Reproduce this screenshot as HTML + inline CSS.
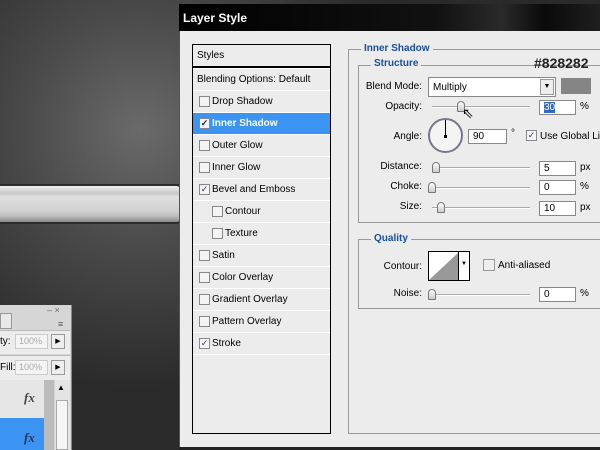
<!DOCTYPE html>
<html><head><style>
*{margin:0;padding:0;box-sizing:border-box}
body{width:600px;height:450px;overflow:hidden;position:relative;font-family:"Liberation Sans",sans-serif;font-size:10px;color:#000;white-space:nowrap;
background:radial-gradient(ellipse 260px 260px at 140px 130px,#6a6a6a 0%,#4a4a4a 45%,#2a2a2a 100%)}
.a{position:absolute}
.dlg{left:179px;top:4px;width:430px;height:446px;background:#ececec;border:1px solid #555}
.title{left:179px;top:4px;width:430px;height:27px;background:linear-gradient(90deg,#000 0%,#111 60%,#2a2a2a 75%,#0a0a0a 85%,#222 100%);color:#fff;font-weight:bold;font-size:12px;padding:7px 4px}
.list{left:192px;top:44px;width:139px;height:390px;border:1px solid #000;background:#ececec}
.row{position:absolute;left:0;width:137px;height:22px;border-bottom:1px solid #fff;line-height:21px;font-size:10px}
.cb{position:absolute;top:5px;width:11px;height:11px;border:1px solid #888;background:#f4f4f4}
.row span{position:absolute;top:0}
.sel{background:#3b93f2;color:#fff;font-weight:bold}
.grp{border:1px solid #999;border-right:none}
.lbl{color:#1a4f9c;font-weight:bold;font-size:10px;background:#ececec;padding:0 3px}
.inp{background:#fff;border:1px solid #888;height:15px;font-size:10px;padding:1px 4px;line-height:12px}
.track{height:2px;background:#aaa;border-bottom:1px solid #fff}
.thumb{width:8px;height:11px;border:1px solid #777;border-radius:4px 4px 1px 1px;background:linear-gradient(#fff,#ccc)}
.r{text-align:right}
</style></head><body>
<div class="a" style="left:0;top:184px;width:182px;height:40px;background:#2d2d2d"></div>
<div class="a" style="left:0;top:186px;width:182px;height:36px;border-radius:0 6px 6px 0;background:linear-gradient(#eee 0%,#ddd 10%,#c8c8c8 20%,#e0e0e0 30%,#d0d0d0 70%,#bbb 85%,#888 100%)"></div>
<div class="a" style="left:0;top:305px;width:72px;height:145px;background:#d6d6d6;border-right:1px solid #888"></div>
<div class="a" style="left:0;top:313px;width:12px;height:16px;background:#e8e8e8;border:1px solid #999"></div>
<div class="a" style="left:47px;top:305px;font-size:9px;color:#666">– ×</div>
<div class="a" style="left:58px;top:319px;font-size:9px;color:#555">≡</div>
<div class="a" style="left:0;top:330px;width:70px;height:24px;background:#ececec;border-top:1px solid #bbb"></div>
<div class="a" style="left:0;top:336px;font-size:10px">ty:</div>
<div class="a" style="left:15px;top:334px;width:33px;height:15px;background:#f4f4f4;border:1px solid #ccc;font-size:9px;color:#aaa;padding:1px 3px">100%</div>
<div class="a" style="left:51px;top:334px;width:14px;height:15px;background:#eee;border:1px solid #999;font-size:7px;text-align:center;line-height:13px">▶</div>
<div class="a" style="left:0;top:355px;width:70px;height:25px;background:#ececec;border-top:1px solid #bbb"></div>
<div class="a" style="left:0;top:362px;font-size:10px">Fill:</div>
<div class="a" style="left:15px;top:360px;width:33px;height:15px;background:#f4f4f4;border:1px solid #ccc;font-size:9px;color:#aaa;padding:1px 3px">100%</div>
<div class="a" style="left:51px;top:360px;width:14px;height:15px;background:#eee;border:1px solid #999;font-size:7px;text-align:center;line-height:13px">▶</div>
<div class="a" style="left:0;top:380px;width:54px;height:38px;background:#e6e6e6"></div>
<div class="a" style="left:24px;top:390px;font-style:italic;font-weight:bold;font-family:'Liberation Serif',serif;font-size:13px;color:#444">fx</div>
<div class="a" style="left:0;top:418px;width:54px;height:32px;background:#3b93f2"></div>
<div class="a" style="left:24px;top:430px;font-style:italic;font-weight:bold;font-family:'Liberation Serif',serif;font-size:13px;color:#335">fx</div>
<div class="a" style="left:44px;top:380px;width:10px;height:70px;background:#bbb"></div>
<div class="a" style="left:55px;top:380px;width:15px;height:70px;background:#e4e4e4"></div>
<div class="a" style="left:57px;top:383px;font-size:8px">▲</div>
<div class="a" style="left:56px;top:400px;width:12px;height:50px;background:#f5f5f5;border:1px solid #aaa"></div>
<div class="a dlg"></div>
<div class="a title">Layer Style</div>
<div class="a list">
 <div class="row" style="top:0;height:23px;border-bottom:2px solid #000;box-shadow:0 1px 0 #fff"><span style="left:4px">Styles</span></div>
 <div class="row" style="top:24px"><span style="left:4px">Blending Options: Default</span></div>
 <div class="row" style="top:46px"><i class="cb" style="left:6px"></i><span style="left:19px">Drop Shadow</span></div>
 <div class="row sel" style="top:68px"><i class="cb" style="left:6px;color:#225;font-style:normal;font-size:9px;line-height:9px;text-align:center">✓</i><span style="left:19px">Inner Shadow</span></div>
 <div class="row" style="top:90px"><i class="cb" style="left:6px"></i><span style="left:19px">Outer Glow</span></div>
 <div class="row" style="top:112px"><i class="cb" style="left:6px"></i><span style="left:19px">Inner Glow</span></div>
 <div class="row" style="top:134px"><i class="cb" style="left:6px;font-style:normal;font-size:9px;line-height:9px;text-align:center;color:#336">✓</i><span style="left:19px">Bevel and Emboss</span></div>
 <div class="row" style="top:156px"><i class="cb" style="left:19px"></i><span style="left:32px">Contour</span></div>
 <div class="row" style="top:178px"><i class="cb" style="left:19px"></i><span style="left:32px">Texture</span></div>
 <div class="row" style="top:200px"><i class="cb" style="left:6px"></i><span style="left:19px">Satin</span></div>
 <div class="row" style="top:222px"><i class="cb" style="left:6px"></i><span style="left:19px">Color Overlay</span></div>
 <div class="row" style="top:244px"><i class="cb" style="left:6px"></i><span style="left:19px">Gradient Overlay</span></div>
 <div class="row" style="top:266px"><i class="cb" style="left:6px"></i><span style="left:19px">Pattern Overlay</span></div>
 <div class="row" style="top:288px"><i class="cb" style="left:6px;font-style:normal;font-size:9px;line-height:9px;text-align:center;color:#336">✓</i><span style="left:19px">Stroke</span></div>
</div>
<div class="a grp" style="left:348px;top:49px;width:260px;height:385px"></div>
<div class="a lbl" style="left:361px;top:43px">Inner Shadow</div>
<div class="a grp" style="left:358px;top:65px;width:250px;height:158px"></div>
<div class="a lbl" style="left:371px;top:58px">Structure</div>
<div class="a" style="left:534px;top:55px;font-weight:bold;font-size:14px;color:#222">#828282</div>
<div class="a r" style="left:350px;width:72px;top:81px">Blend Mode:</div>
<div class="a inp" style="left:428px;top:77px;width:128px;height:20px;padding:4px"><span>Multiply</span></div>
<div class="a" style="left:540px;top:79px;width:14px;height:16px;background:#eee;border:1px solid #999;font-size:7px;text-align:center;line-height:14px">▼</div>
<div class="a" style="left:561px;top:78px;width:30px;height:16px;background:#858585"></div>
<div class="a r" style="left:350px;width:72px;top:101px">Opacity:</div>
<div class="a track" style="left:432px;top:106px;width:98px"></div>
<div class="a thumb" style="left:457px;top:101px"></div>
<div class="a" style="left:462px;top:106px;font-size:14px;line-height:14px">⇖</div>
<div class="a inp" style="left:539px;top:100px;width:37px"><span style="background:#3169c6;color:#fff">30</span></div>
<div class="a" style="left:580px;top:101px">%</div>
<div class="a r" style="left:350px;width:72px;top:131px">Angle:</div>
<div class="a" style="left:428px;top:118px;width:35px;height:35px;border-radius:50%;border:2px solid #778;background:#f4f4f4"></div>
<div class="a" style="left:445px;top:120px;width:1px;height:16px;background:#000"></div>
<div class="a" style="left:444px;top:135px;width:3px;height:3px;background:#000"></div>
<div class="a inp" style="left:468px;top:129px;width:39px">90</div>
<div class="a" style="left:511px;top:128px">°</div>
<div class="a" style="left:526px;top:130px;width:11px;height:11px;border:1px solid #888;background:#f4f4f4;font-size:9px;line-height:9px;text-align:center;color:#336">✓</div>
<div class="a" style="left:540px;top:131px">Use Global Light</div>
<div class="a r" style="left:350px;width:72px;top:161px">Distance:</div>
<div class="a track" style="left:432px;top:167px;width:98px"></div>
<div class="a thumb" style="left:432px;top:162px"></div>
<div class="a inp" style="left:539px;top:161px;width:37px">5</div>
<div class="a" style="left:580px;top:162px">px</div>
<div class="a r" style="left:350px;width:72px;top:181px">Choke:</div>
<div class="a track" style="left:430px;top:187px;width:100px"></div>
<div class="a thumb" style="left:428px;top:182px"></div>
<div class="a inp" style="left:539px;top:180px;width:37px">0</div>
<div class="a" style="left:580px;top:181px">%</div>
<div class="a r" style="left:350px;width:72px;top:201px">Size:</div>
<div class="a track" style="left:432px;top:207px;width:98px"></div>
<div class="a thumb" style="left:437px;top:202px"></div>
<div class="a inp" style="left:539px;top:201px;width:37px">10</div>
<div class="a" style="left:580px;top:202px">px</div>
<div class="a grp" style="left:358px;top:239px;width:250px;height:70px"></div>
<div class="a lbl" style="left:371px;top:233px">Quality</div>
<div class="a r" style="left:350px;width:72px;top:261px">Contour:</div>
<div class="a" style="left:428px;top:251px;width:42px;height:30px;border:1px solid #000;background:#fff"></div>
<svg class="a" style="left:429px;top:252px" width="30" height="28"><polygon points="0,28 30,0 30,28" fill="#999"/></svg>
<div class="a" style="left:458px;top:252px;width:11px;height:28px;border-left:1px solid #000;background:#fff;font-size:6px;text-align:center;line-height:24px">▼</div>
<div class="a" style="left:483px;top:259px;width:12px;height:12px;border:1px solid #999;background:#eee"></div>
<div class="a" style="left:498px;top:260px">Anti-aliased</div>
<div class="a r" style="left:350px;width:72px;top:288px">Noise:</div>
<div class="a track" style="left:430px;top:294px;width:100px"></div>
<div class="a thumb" style="left:428px;top:289px"></div>
<div class="a inp" style="left:539px;top:287px;width:37px">0</div>
<div class="a" style="left:580px;top:288px">%</div>
<div class="a" style="left:179px;top:447px;width:430px;height:3px;background:#222"></div>
</body></html>
